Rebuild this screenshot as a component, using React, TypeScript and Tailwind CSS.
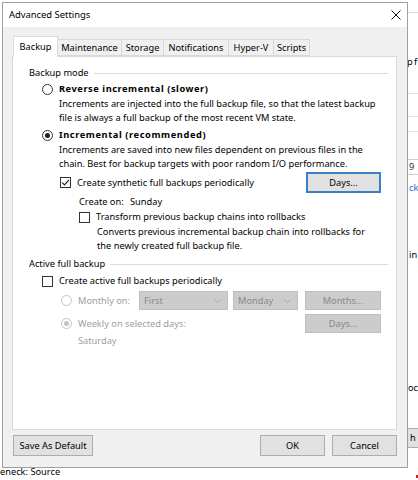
import React from "react";

function Radio({ checked, disabled }: { checked?: boolean; disabled?: boolean }) {
  return (
    <span
      className={`w-[11px] h-[11px] rounded-full border flex items-center justify-center shrink-0 bg-white ${
        disabled ? "border-[#c4c4c4]" : "border-[#333333]"
      }`}
    >
      {checked && (
        <span className={`w-[5px] h-[5px] rounded-full ${disabled ? "bg-[#c4c4c4]" : "bg-[#222222]"}`} />
      )}
    </span>
  );
}

function Check({ checked }: { checked?: boolean }) {
  return (
    <span className="w-[11px] h-[11px] border border-[#333333] bg-white shrink-0 flex items-center justify-center">
      {checked && (
        <svg width="9" height="9" viewBox="0 0 9 9">
          <path d="M1.2 4.6 L3.5 6.9 L7.9 1.8" fill="none" stroke="#222" strokeWidth="1.1" />
        </svg>
      )}
    </span>
  );
}

function GroupLabel({ text }: { text: string }) {
  return (
    <div className="flex items-center h-[14px] gap-[5px]">
      <span>{text}</span>
      <div className="flex-1 h-px bg-[#dcdcdc]" />
    </div>
  );
}

function Combo({ text, w }: { text: string; w: string }) {
  return (
    <div
      className={`${w} h-[19px] bg-[#cccccc] border border-[#bfbfbf] flex items-center justify-between pl-[4px] pr-[6px] text-[#8a8a8a]`}
    >
      <span>{text}</span>
      <svg width="7" height="4" viewBox="0 0 7 4">
        <path d="M0.5 0.5 L3.5 3.5 L6.5 0.5" fill="none" stroke="#a9a9a9" strokeWidth="1" />
      </svg>
    </div>
  );
}

export default function App() {
  return (
    <div className="relative w-[418px] h-[480px] bg-white overflow-hidden font-['Noto_Sans',sans-serif] text-[9.25px] text-black">
      {/* background window fragments on the right */}
      <div className="absolute left-[407px] top-[12px] w-[11px] h-px bg-[#d9d9d9]" />
      <div className="absolute left-[407px] top-[55px] leading-[14px] whitespace-nowrap tracking-[-0.6px]">p f</div>
      <div className="absolute left-[407px] top-[93px] w-[11px] h-px bg-[#e3e3e3]" />
      <div className="absolute left-[407px] top-[116px] w-[11px] h-px bg-[#e3e3e3]" />
      <div className="absolute left-[407px] top-[131px] w-[11px] h-px bg-[#e3e3e3]" />
      <div className="absolute left-[407px] top-[159px] w-[11px] h-[16px] border-y border-[#d0d0d0] pl-[2px] leading-[14px] text-[#333]">9</div>
      <div className="absolute left-[409px] top-[181px] leading-[14px] text-[#1f6fd0]">ck</div>
      <div className="absolute left-[409px] top-[248px] leading-[14px]">in</div>
      <div className="absolute left-[408px] top-[381px] leading-[14px]">oc</div>
      <div className="absolute left-[405px] top-[428px] w-[14px] h-[20px] bg-[#e1e1e1] border border-[#adadad] pl-[4px] leading-[18px]">h</div>
      <div className="absolute left-[416px] top-[475px] w-[2px] h-[3px] bg-[#d02020]" />

      {/* text under the dialog */}
      <div className="absolute left-0 top-[465px] leading-[14px] whitespace-nowrap">eneck: Source</div>

      {/* dialog window */}
      <div className="absolute left-[2px] top-[2px] w-[406px] h-[466px] border border-[#a0a0a0] bg-[#f0f0f0] flex flex-col">
        {/* title bar */}
        <div className="h-[25px] bg-white flex items-center justify-between pl-[6px] pr-[6px]">
          <span className="text-[9.4px]">Advanced Settings</span>
          <svg width="10" height="10" viewBox="0 0 10 10">
            <path d="M0.5 0.5 L9.5 9.5 M9.5 0.5 L0.5 9.5" stroke="#111" strokeWidth="1" />
          </svg>
        </div>

        {/* body */}
        <div className="flex-1 flex flex-col pl-[9px] pr-[10px] pt-[9px] pb-[11px]">
          {/* tabs */}
          <div className="flex items-end h-[20px] relative z-10">
            <div className="w-[45px] h-[21px] -mb-px bg-white border border-[#d9d9d9] border-b-0 flex items-center justify-center ml-[1px]">
              Backup
            </div>
            <div className="w-[64px] h-[17px] bg-[#f0f0f0] border border-[#d9d9d9] border-l-0 flex items-center justify-center">
              Maintenance
            </div>
            <div className="w-[42px] h-[17px] bg-[#f0f0f0] border border-[#d9d9d9] border-l-0 flex items-center justify-center">
              Storage
            </div>
            <div className="w-[65px] h-[17px] bg-[#f0f0f0] border border-[#d9d9d9] border-l-0 flex items-center justify-center">
              Notifications
            </div>
            <div className="w-[45px] h-[17px] bg-[#f0f0f0] border border-[#d9d9d9] border-l-0 flex items-center justify-center">
              Hyper-V
            </div>
            <div className="w-[36px] h-[17px] bg-[#f0f0f0] border border-[#d9d9d9] border-l-0 flex items-center justify-center">
              Scripts
            </div>
          </div>

          {/* panel */}
          <div className="h-[374px] bg-white border border-[#d9d9d9] pl-[16px] pr-[8px] pt-[9px] flex flex-col">
            <GroupLabel text="Backup mode" />

            <div className="mt-[2px] ml-[13px] h-[14px] flex items-center gap-[6px] font-bold">
              <Radio />
              <span className="tracking-[0.55px]">Reverse incremental (slower)</span>
            </div>
            <div className="mt-[1px] ml-[30px] leading-[13.5px]">
              <div>Increments are injected into the full backup file, so that the latest backup</div>
              <div>file is always a full backup of the most recent VM state.</div>
            </div>

            <div className="mt-[4px] ml-[13px] h-[14px] flex items-center gap-[6px] font-bold">
              <Radio checked />
              <span className="tracking-[0.6px]">Incremental (recommended)</span>
            </div>
            <div className="mt-[1px] ml-[30px] leading-[13.5px]">
              <div>Increments are saved into new files dependent on previous files in the</div>
              <div>chain. Best for backup targets with poor random I/O performance.</div>
            </div>

            <div className="mt-[2px] ml-[31px] mr-[7px] h-[21px] flex items-center">
              <Check checked />
              <span className="ml-[6px]">Create synthetic full backups periodically</span>
              <div className="ml-auto w-[75px] h-[21px] bg-[#e1e1e1] border-2 border-[#3b7fc4] flex items-center justify-center">
                Days...
              </div>
            </div>

            <div className="mt-[2px] ml-[50px] h-[14px] flex items-center">
              <span className="w-[51px]">Create on:</span>
              <span>Sunday</span>
            </div>

            <div className="mt-[1px] ml-[50px] h-[14px] flex items-center gap-[6px]">
              <Check />
              <span>Transform previous backup chains into rollbacks</span>
            </div>
            <div className="mt-[1px] ml-[68px] leading-[13.5px]">
              <div>Converts previous incremental backup chain into rollbacks for</div>
              <div>the newly created full backup file.</div>
            </div>

            <div className="mt-[5px]">
              <GroupLabel text="Active full backup" />
            </div>

            <div className="mt-[3px] ml-[13px] h-[14px] flex items-center gap-[6px]">
              <Check />
              <span>Create active full backups periodically</span>
            </div>

            <div className="mt-[3px] ml-[32px] mr-[7px] h-[19px] flex items-center text-[#a0a0a0]">
              <Radio disabled />
              <span className="ml-[6px] w-[61px]">Monthly on:</span>
              <Combo text="First" w="w-[89px]" />
              <div className="ml-[5px]">
                <Combo text="Monday" w="w-[65px]" />
              </div>
              <div className="ml-auto w-[76px] h-[19px] bg-[#cccccc] border border-[#bfbfbf] flex items-center justify-center text-[#8a8a8a]">
                Months...
              </div>
            </div>

            <div className="mt-[4px] ml-[32px] mr-[7px] h-[19px] flex items-center text-[#a0a0a0]">
              <Radio checked disabled />
              <span className="ml-[6px]">Weekly on selected days:</span>
              <div className="ml-auto w-[76px] h-[19px] bg-[#cccccc] border border-[#bfbfbf] flex items-center justify-center text-[#8a8a8a]">
                Days...
              </div>
            </div>

            <div className="mt-[1px] ml-[49px] h-[14px] flex items-center text-[#a0a0a0]">Saturday</div>
          </div>

          {/* bottom buttons */}
          <div className="mt-[5px] flex items-center h-[21px]">
            <div className="ml-[1px] w-[80px] h-[21px] bg-[#e1e1e1] border border-[#adadad] flex items-center justify-center">
              Save As Default
            </div>
            <div className="ml-auto w-[65px] h-[21px] bg-[#e1e1e1] border border-[#adadad] flex items-center justify-center">
              OK
            </div>
            <div className="ml-[7px] w-[65px] h-[21px] bg-[#e1e1e1] border border-[#adadad] flex items-center justify-center">
              Cancel
            </div>
          </div>
        </div>
      </div>
    </div>
  );
}
